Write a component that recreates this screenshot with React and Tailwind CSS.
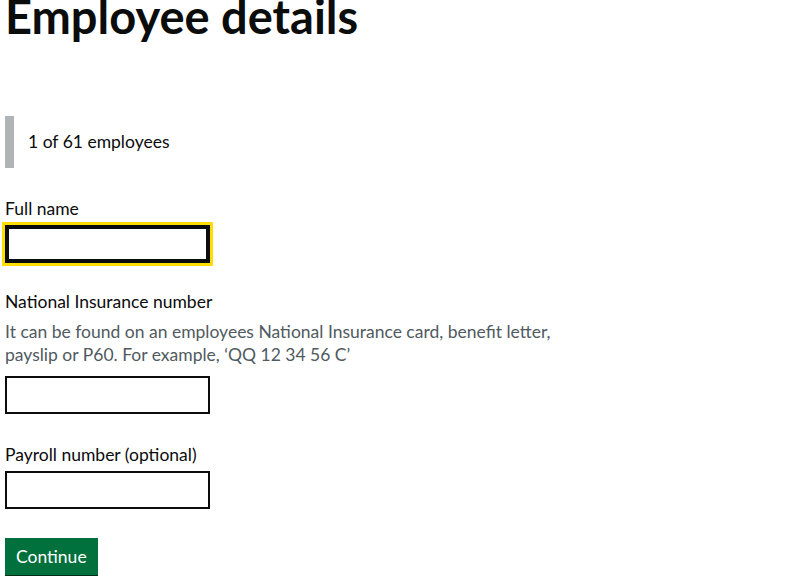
import React from 'react';

const Field = ({ label, hint, focused, className = '' }) => (
  <div className={className}>
    <label className="block text-[17.5px] leading-[24px] text-[#0b0c0c]">{label}</label>
    {hint && (
      <div className="mt-[6px] max-w-[560px] text-[17.5px] leading-[23px] text-[#505a5f]">{hint}</div>
    )}
    <input
      type="text"
      className={
        (hint ? 'mt-[10px] ' : 'mt-[4px] ') +
        (focused
          ? 'block h-[38px] w-[205px] border-[4px] border-[#0b0c0c] bg-white outline outline-[3px] outline-[#ffdd00]'
          : 'block h-[38px] w-[205px] border-2 border-[#0b0c0c] bg-white outline-none')
      }
    />
  </div>
);

export default function App() {
  return (
    <div className="min-h-screen bg-white px-[5px] font-['Lato',sans-serif] text-[#0b0c0c]">
      <h1 className="-mt-[9px] text-[47px] font-bold leading-[50px]">Employee details</h1>

      <div className="mt-[75px] flex h-[52px] items-center border-l-[9px] border-[#b1b4b6] pl-[14px] text-[17.5px]">
        1 of 61 employees
      </div>

      <Field className="mt-[29px]" label="Full name" focused />

      <Field
        className="mt-[27px]"
        label="National Insurance number"
        hint="It can be found on an employees National Insurance card, benefit letter, payslip or P60. For example, ‘QQ 12 34 56 C’"
      />

      <Field className="mt-[29px]" label="Payroll number (optional)" />

      <button className="mt-[29px] block h-[37px] bg-[#00703c] px-[11px] text-[17.5px] leading-none text-white shadow-[0_2px_0_#002d18]">
        Continue
      </button>
    </div>
  );
}
